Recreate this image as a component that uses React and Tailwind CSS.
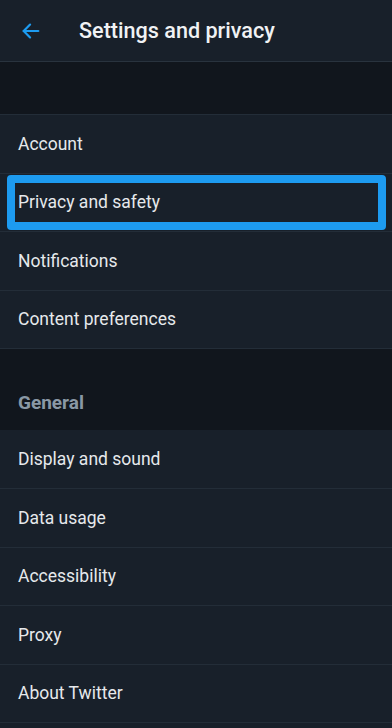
import React from "react";

const accountItems = ["Account", "Privacy and safety", "Notifications", "Content preferences"];
const generalItems = ["Display and sound", "Data usage", "Accessibility", "Proxy", "About Twitter"];

const Row = ({ label, highlighted }) => (
  <div className="relative flex h-[58.6px] items-center border-b border-[#232d38] bg-[#18202a] px-[18px]">
    <span className="text-[17.5px] text-[#e6e9ec]">{label}</span>
    {highlighted && (
      <div className="pointer-events-none absolute left-[7px] right-[6px] top-[1px] bottom-[1px] rounded-[4px] border-[8px] border-[#1d9bf0]" />
    )}
  </div>
);

export default function App() {
  return (
    <div
      className="flex h-[728px] w-full flex-col overflow-hidden bg-[#18202a]"
      style={{ fontFamily: "Roboto, 'Liberation Sans', sans-serif" }}
    >
      <div className="flex h-[62px] items-center border-b border-[#29333e] bg-[#18202a]">
        <svg className="ml-[20px] mt-[1px] h-[22px] w-[22px]" viewBox="0 0 24 24" fill="none" stroke="#1d9bf0" strokeWidth="2.4" strokeLinecap="round" strokeLinejoin="round">
          <path d="M20 12H4" />
          <path d="M11 5l-7 7 7 7" />
        </svg>
        <h1 className="ml-[37px] mt-[2px] text-[21.6px] font-medium text-[#f0f2f4]">Settings and privacy</h1>
      </div>

      <div className="h-[53px] border-b border-[#232d38] bg-[#11161d]" />

      {accountItems.map((item) => (
        <Row key={item} label={item} highlighted={item === "Privacy and safety"} />
      ))}

      <div className="flex h-[81px] items-end bg-[#11161d] px-[18px] pb-[13px]">
        <span className="text-[19px] font-bold text-[#8a98a5]">General</span>
      </div>

      {generalItems.map((item) => (
        <Row key={item} label={item} />
      ))}

      <div className="flex-1 bg-[#18202a]" />
    </div>
  );
}
